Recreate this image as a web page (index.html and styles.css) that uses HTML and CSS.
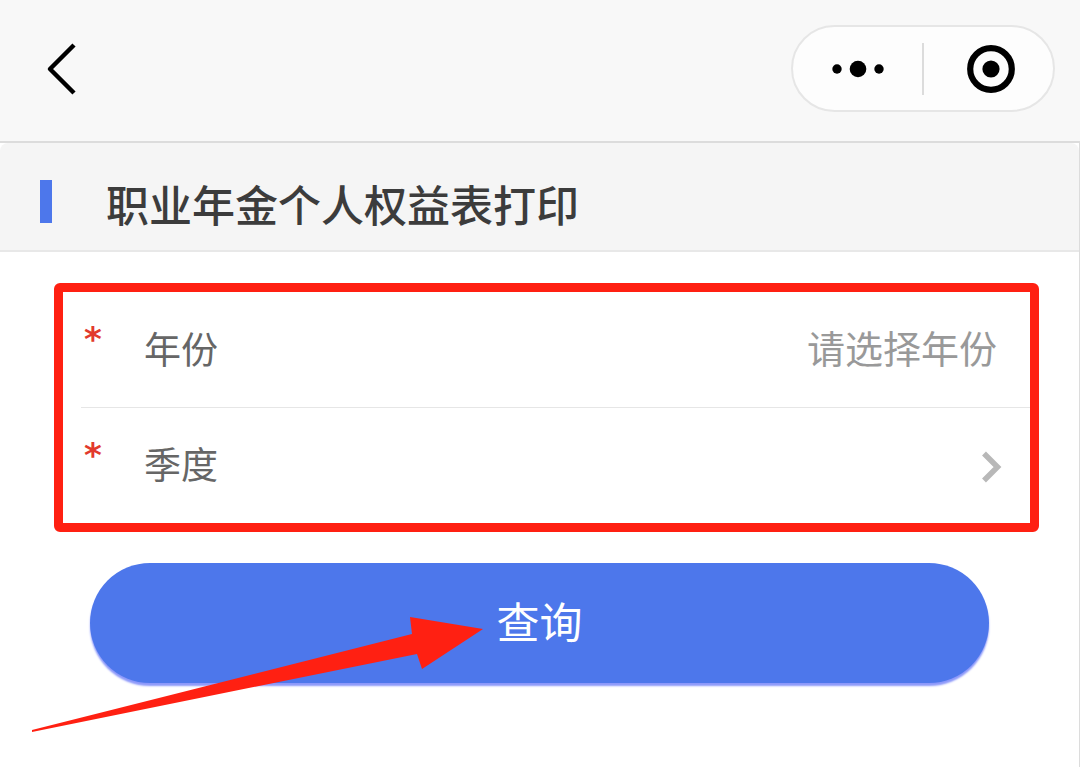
FILE: index.html
```html
<!DOCTYPE html>
<html lang="zh-CN">
<head>
    <meta charset="UTF-8">
    <meta name="viewport" content="width=device-width, initial-scale=1.0">
    <title>职业年金个人权益表打印</title>
    <link rel="stylesheet" href="styles.css">
</head>
<body>
    <header class="navbar">
        <button class="back-btn" type="button" aria-label="返回">
            <svg width="36" height="56" viewBox="0 0 36 56">
                <path d="M30 4 L6 28 L30 52" fill="none" stroke="#000" stroke-width="4.500" stroke-linejoin="round"/>
            </svg>
        </button>
        <div class="capsule">
            <button class="capsule-btn" type="button" aria-label="更多">
                <svg width="52" height="18" viewBox="0 0 52 18">
                    <circle cx="5" cy="9" r="4.7"/>
                    <circle cx="26" cy="9" r="8.3"/>
                    <circle cx="47" cy="9" r="4.7"/>
                </svg>
            </button>
            <span class="capsule-line"></span>
            <button class="capsule-btn close-btn" type="button" aria-label="关闭">
                <svg width="48" height="48" viewBox="0 0 48 48">
                    <circle cx="24" cy="24" r="20.800" fill="none" stroke="#000" stroke-width="6.200"/>
                    <circle cx="24" cy="24" r="8.6"/>
                </svg>
            </button>
        </div>
    </header>

    <main class="page">
        <div class="section-title">
            <h1>职业年金个人权益表打印</h1>
        </div>

        <form class="query-form">
            <div class="field-group">
                <div class="field">
                    <span class="required">*</span>
                    <label for="year">年份</label>
                    <select id="year" name="year">
                        <option value="">请选择年份</option>
                    </select>
                </div>
                <div class="field">
                    <span class="required">*</span>
                    <label for="quarter">季度</label>
                    <select id="quarter" name="quarter">
                        <option value=""></option>
                    </select>
                    <svg class="chevron" width="20" height="32" viewBox="0 0 20 32">
                        <path d="M2 2.500 L15.500 16 L2 29.500" fill="none" stroke="#b8b8b8" stroke-width="5.500"/>
                    </svg>
                </div>
            </div>

            <div class="submit-row">
                <button class="submit-btn" type="submit">查询</button>
                <svg class="arrow" width="454" height="118" viewBox="0 0 454 118">
                    <path d="M1 114 L381 18 L379 1 L452 13 L391 53 L386 38 L1 116 Z" fill="#ff2012"/>
                </svg>
            </div>
        </form>
    </main>
</body>
</html>
```
FILE: styles.css
```css
* {
    box-sizing: border-box;
}

body {
    margin: 0;
    min-height: 100vh;
    display: flex;
    flex-direction: column;
    background-color: #fff;
    font-family: "Noto Sans CJK SC", sans-serif;
}

button,
select {
    border: none;
    padding: 0;
    background: none;
    font-family: inherit;
    cursor: pointer;
}

svg {
    display: block;
}

.navbar {
    display: flex;
    justify-content: space-between;
    align-items: center;
    padding: 25px 25px 29px 44px;
    background-color: #f8f8f8;
    border-bottom: 2px solid #dcdcdc;
}

.capsule {
    display: flex;
    align-items: center;
    height: 87px;
    border: 2px solid #e6e6e6;
    border-radius: 44px;
    background-color: #fdfdfd;
}

.capsule-btn {
    width: 129px;
    height: 100%;
    display: flex;
    justify-content: center;
    align-items: center;
}

.close-btn {
    padding-left: 4px;
}

.capsule-line {
    width: 2px;
    height: 52px;
    background-color: #dcdcdc;
}

.page {
    flex: 1;
    border-right: 1px solid #dcdcdc;
}

.section-title {
    display: flex;
    align-items: flex-start;
    gap: 54px;
    padding: 37px 40px 24px;
    background-color: #f5f5f5;
    border-bottom: 2px solid #e8e8e8;
    border-radius: 8px 8px 0 0;
}

.section-title::before {
    content: "";
    width: 12px;
    height: 43px;
    background-color: #4d77eb;
}

.section-title h1 {
    margin: 0;
    color: #3c3c3c;
    font-size: 43px;
    font-weight: 500;
    line-height: 46px;
}

.query-form {
    padding: 31px 40px 0 54px;
}

.field-group {
    border: 9px solid #ff2012;
    border-radius: 6px;
    padding: 0 0 1px 18px;
}

.field {
    display: flex;
    align-items: center;
    height: 115px;
    padding: 0 28px 4px 0;
    color: #666;
    font-size: 37px;
}

.field + .field {
    border-top: 1px solid #e6e6e6;
}

.required {
    align-self: flex-start;
    width: 63px;
    padding: 27px 0 0 3px;
    color: #e23a2c;
    font-family: "DejaVu Sans", sans-serif;
    font-size: 34px;
    font-weight: bold;
    line-height: 40px;
}

.field select {
    flex: 1;
    appearance: none;
    padding: 0 5px 2px 0;
    color: #999;
    font-size: 38px;
    text-align-last: right;
    outline: none;
}

.chevron {
    margin-top: 8px;
}

.submit-row {
    position: relative;
    padding: 31px 50px 0 36px;
}

.submit-btn {
    display: block;
    width: 100%;
    height: 120px;
    padding-bottom: 6px;
    border-radius: 60px;
    background-color: #4d77eb;
    box-shadow: 0 3px 2px #8c98fa;
    color: #fff;
    font-size: 43px;
}

.submit-btn:hover {
    background-color: #4069dc;
}

/* Pointer drawn over the submit button */
.arrow {
    position: absolute;
    top: 84px;
    left: -23px;
    pointer-events: none;
}
```
